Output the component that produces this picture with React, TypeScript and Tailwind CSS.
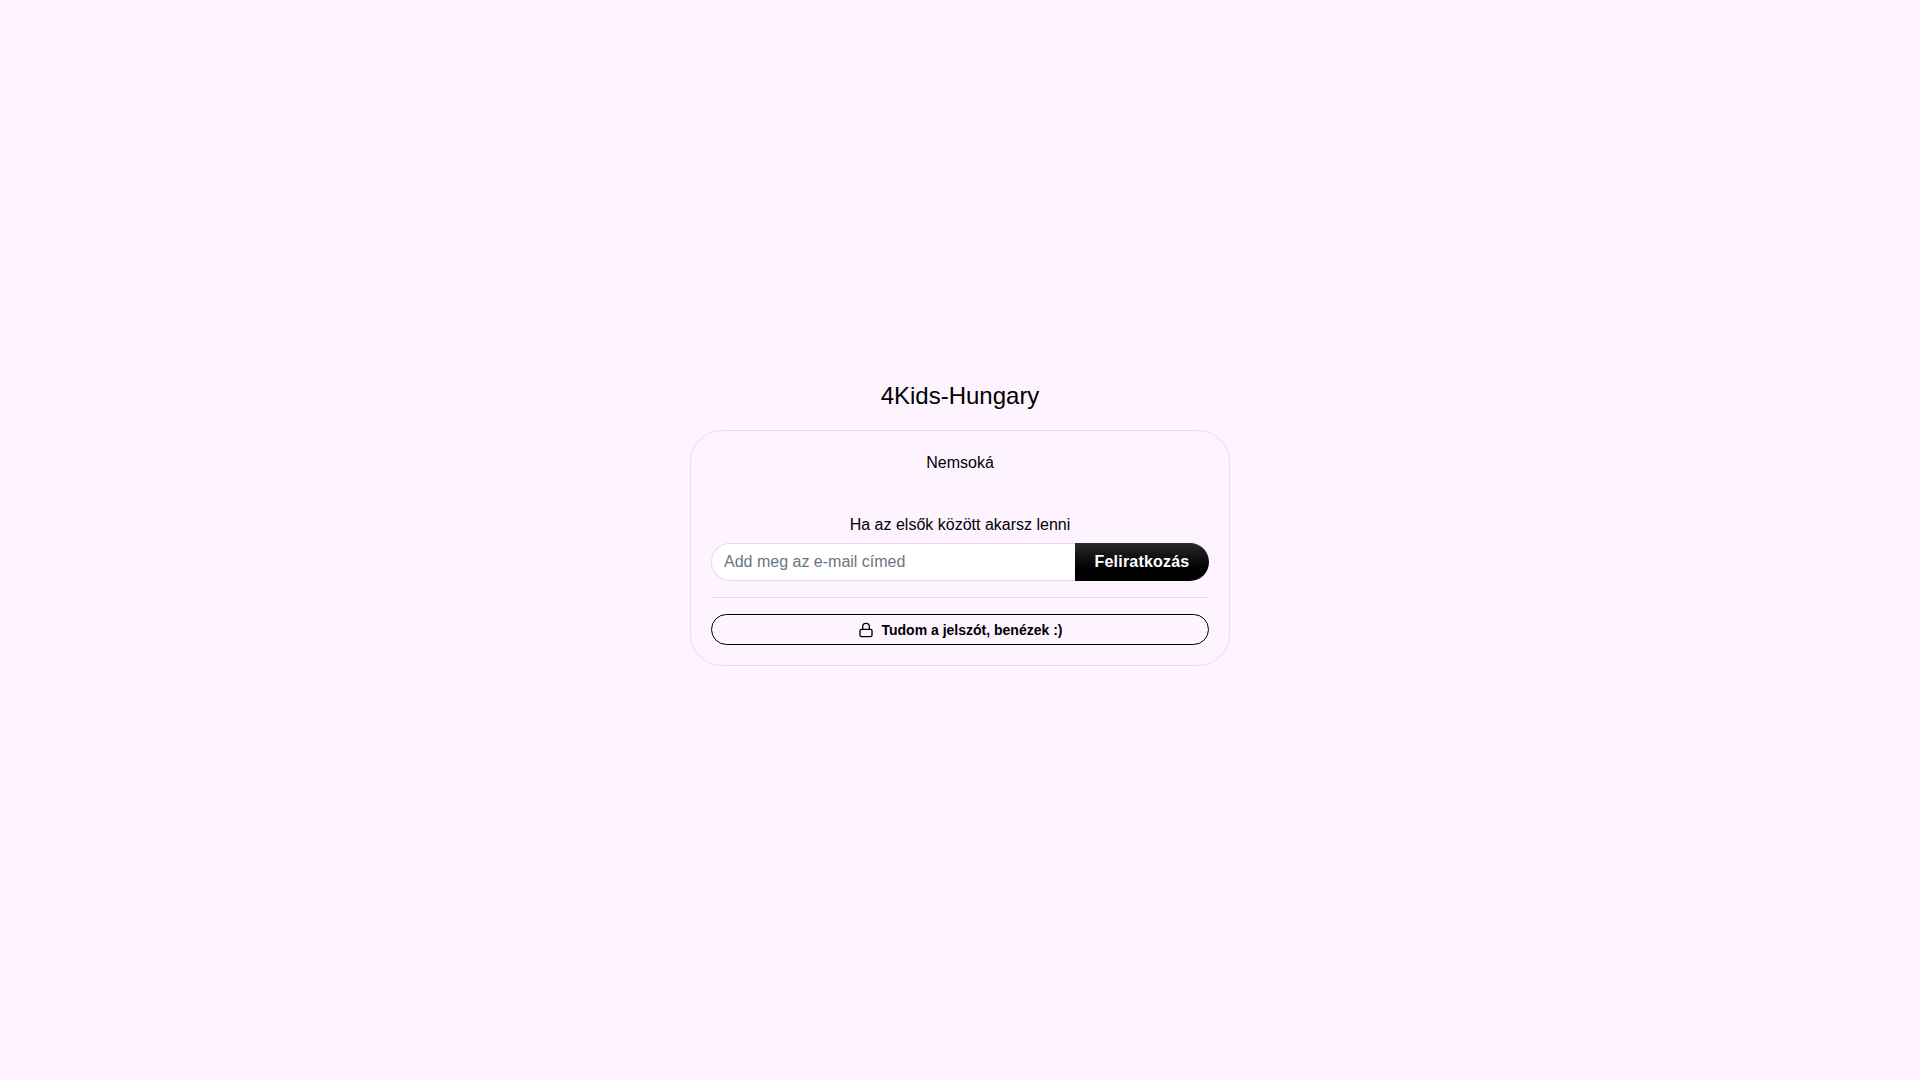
import { Lock } from "lucide-react";

export default function App() {
  return (
    <div className="min-h-screen bg-[#fdf4ff] flex flex-col items-center pt-[381px] text-black font-['Liberation_Sans',Arial,sans-serif]">
      <h1 className="text-2xl leading-[29px] font-normal mb-[20px] text-center">4Kids-Hungary</h1>
      <div className="w-[540px] border border-[#f5d0fe] rounded-[32px] p-[20px] flex flex-col items-stretch">
        <p className="text-base leading-6 text-center mb-[26px]">Nemsoká</p>
        <p className="text-base leading-6 text-center mt-[12px] mb-[6px]">Ha az elsők között akarsz lenni</p>
        <div className="flex h-[38px]">
          <input
            placeholder="Add meg az e-mail címed"
            className="flex-1 min-w-0 bg-white border border-[#f5d0fe] border-r-0 rounded-l-full pl-3 pr-3 text-base text-black placeholder:text-[#6c757d] outline-none"
          />
          <button className="w-[134px] rounded-r-full bg-gradient-to-b from-[#2b2b2b] to-black text-white font-bold text-base tracking-[0.2px]">
            Feliratkozás
          </button>
        </div>
        <hr className="my-4 border-0 border-t border-[#e5d7ea]" />
        <button className="h-[31px] rounded-full border border-black bg-transparent flex items-center justify-center gap-2 text-sm font-bold">
          <Lock size={16} strokeWidth={2} />
          Tudom a jelszót, benézek :)
        </button>
      </div>
    </div>
  );
}
